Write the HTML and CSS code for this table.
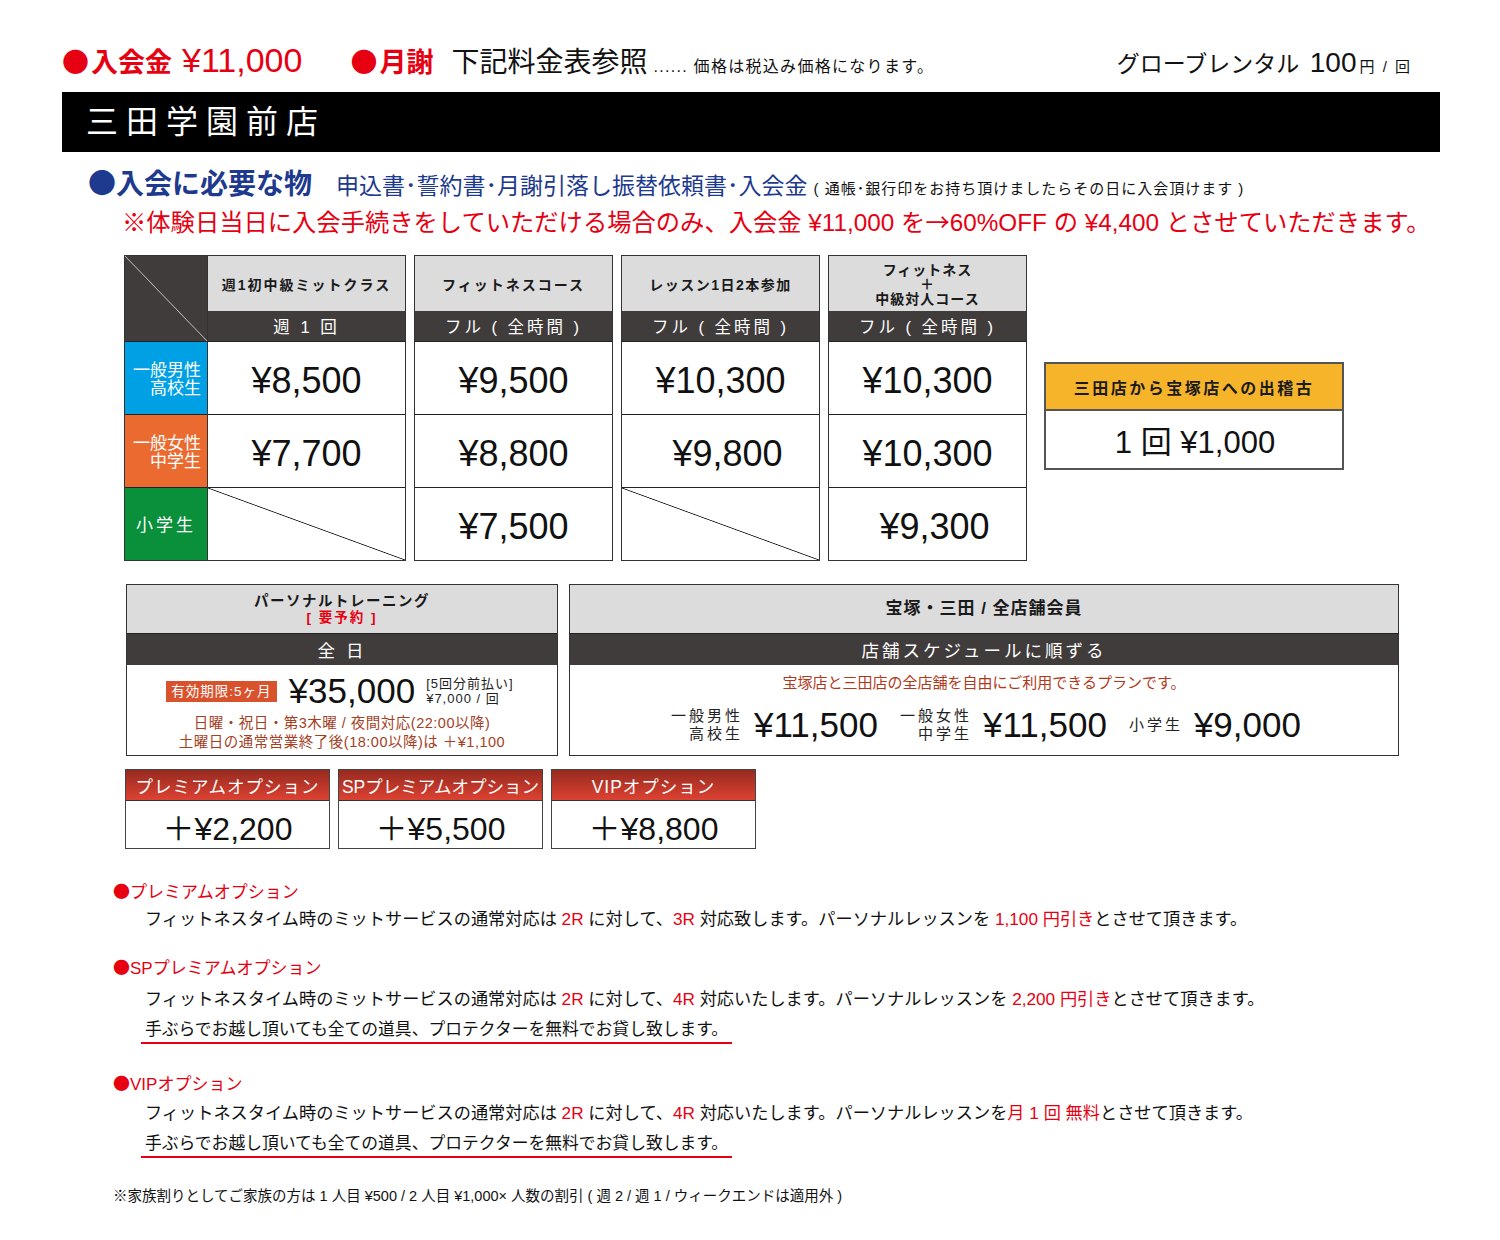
FILE: index.html
```html
<!DOCTYPE html>
<html lang="ja">
<head>
<meta charset="utf-8">
<title>三田学園前店 料金表</title>
<link rel="stylesheet" href="styles.css">
</head>
<body>
<div class="page">
  <div class="topline">
    <div class="fee"><span class="dot">●</span><b>入会金</b><span class="feenum">¥11,000</span></div>
    <div class="monthly"><span class="dot">●</span><b>月謝</b></div>
    <div class="ref">下記料金表参照</div>
    <div class="tax">...... 価格は税込み価格になります。</div>
    <div class="glove">グローブレンタル <span class="gnum">100</span><span class="gunit">円 / 回</span></div>
  </div>

  <div class="storebar">三田学園前店</div>

  <div class="req">
    <span class="reqtitle"><span class="dot">●</span>入会に必要な物</span>
    <span class="reqdocs">申込書･誓約書･月謝引落し振替依頼書･入会金</span>
    <span class="reqsmall">( 通帳･銀行印をお持ち頂けましたらその日に入会頂けます )</span>
  </div>
  <div class="note">※体験日当日に入会手続きをしていただける場合のみ、入会金 ¥11,000 を<span class="cjk">→</span>60%OFF の ¥4,400 とさせていただきます。</div>

  <div class="content">
    <div class="pricearea">
      <div class="grp">
        <div class="lcol">
          <div class="corner"></div>
          <div class="lcell blue"><span>一般男性<br>高校生</span></div>
          <div class="lcell orange"><span>一般女性<br>中学生</span></div>
          <div class="lcell green center"><span>小学生</span></div>
        </div>
        <div class="pcol">
          <div class="phead">週1初中級ミットクラス</div>
          <div class="psub">週 1 回</div>
          <div class="pcell">¥8,500</div>
          <div class="pcell">¥7,700</div>
          <div class="pcell slash"></div>
        </div>
      </div>
      <div class="pcol">
        <div class="phead">フィットネスコース</div>
        <div class="psub">フル ( 全時間 )</div>
        <div class="pcell">¥9,500</div>
        <div class="pcell">¥8,800</div>
        <div class="pcell">¥7,500</div>
      </div>
      <div class="pcol">
        <div class="phead tight">レッスン1日2本参加</div>
        <div class="psub">フル ( 全時間 )</div>
        <div class="pcell">¥10,300</div>
        <div class="pcell shift">¥9,800</div>
        <div class="pcell slash"></div>
      </div>
      <div class="pcol">
        <div class="phead stack">フィットネス<br>＋<br>中級対人コース</div>
        <div class="psub">フル ( 全時間 )</div>
        <div class="pcell">¥10,300</div>
        <div class="pcell">¥10,300</div>
        <div class="pcell shift">¥9,300</div>
      </div>
      <div class="visit">
        <div class="visithead">三田店から宝塚店への出稽古</div>
        <div class="visitbody">1 回 ¥1,000</div>
      </div>
    </div>

    <div class="row2">
      <div class="box ptbox">
        <div class="bhead"><div class="bt">パーソナルトレーニング</div><div class="bred">[ 要予約 ]</div></div>
        <div class="bsub">全 日</div>
        <div class="ptbody">
          <div class="ptrow">
            <span class="badge">有効期限:5ヶ月</span>
            <span class="ptprice">¥35,000</span>
            <span class="ptsmall">[5回分前払い]<br>¥7,000 / 回</span>
          </div>
          <div class="ptnote">日曜・祝日・第3木曜 / 夜間対応(22:00以降)<br>土曜日の通常営業終了後(18:00以降)は ＋¥1,100</div>
        </div>
      </div>
      <div class="box asbox">
        <div class="bhead"><div class="bt big">宝塚・三田 / 全店舗会員</div></div>
        <div class="bsub">店舗スケジュールに順ずる</div>
        <div class="asbody">
          <div class="asnote">宝塚店と三田店の全店舗を自由にご利用できるプランです。</div>
          <div class="asrow">
            <span class="aslabel">一般男性<br>高校生</span><span class="asprice">¥11,500</span>
            <span class="aslabel">一般女性<br>中学生</span><span class="asprice">¥11,500</span>
            <span class="aslabel">小学生</span><span class="asprice">¥9,000</span>
          </div>
        </div>
      </div>
    </div>

    <div class="options">
      <div class="opt"><div class="opthead">プレミアムオプション</div><div class="optbody">＋¥2,200</div></div>
      <div class="opt"><div class="opthead sp">SPプレミアムオプション</div><div class="optbody">＋¥5,500</div></div>
      <div class="opt"><div class="opthead">VIPオプション</div><div class="optbody">＋¥8,800</div></div>
    </div>
  </div>

  <div class="notes">
    <div class="nt n1"><span class="dot">●</span>プレミアムオプション</div>
    <div class="np p1">フィットネスタイム時のミットサービスの通常対応は <em>2R</em> に対して、<em>3R</em> 対応致します。パーソナルレッスンを <em>1,100 円引き</em>とさせて頂きます。</div>

    <div class="nt n2"><span class="dot">●</span>SPプレミアムオプション</div>
    <div class="np p2">フィットネスタイム時のミットサービスの通常対応は <em>2R</em> に対して、<em>4R</em> 対応いたします。パーソナルレッスンを <em>2,200 円引き</em>とさせて頂きます。</div>
    <div class="np"><span class="ul">手ぶらでお越し頂いても全ての道具、プロテクターを無料でお貸し致します。</span></div>

    <div class="nt n3"><span class="dot">●</span>VIPオプション</div>
    <div class="np p4">フィットネスタイム時のミットサービスの通常対応は <em>2R</em> に対して、<em>4R</em> 対応いたします。パーソナルレッスンを<em>月 1 回 無料</em>とさせて頂きます。</div>
    <div class="np"><span class="ul">手ぶらでお越し頂いても全ての道具、プロテクターを無料でお貸し致します。</span></div>

    <div class="foot">※家族割りとしてご家族の方は 1 人目 ¥500 / 2 人目 ¥1,000× 人数の割引 ( 週 2 / 週 1 / ウィークエンドは適用外 )</div>
  </div>
</div>
</body>
</html>
```

FILE: styles.css
```css
* { box-sizing: border-box; }
html, body { margin: 0; padding: 0; background: #fff; }
body {
  font-family: "Liberation Sans", "Noto Sans CJK JP", sans-serif;
  color: #1a1a1a;
}
.page { width: 1500px; padding: 40px 60px 0 62px; }
.dot, .cjk { font-family: "Noto Sans CJK JP", sans-serif; }

/* top line */
.topline { display: flex; align-items: baseline; height: 40px; line-height: 40px; }
.fee, .monthly { color: #e60012; font-size: 27px; }
.fee b, .monthly b { font-weight: 700; }
.fee .dot, .monthly .dot { margin-right: 2px; }
.feenum { font-size: 34px; margin-left: 10px; }
.monthly { margin-left: 48px; }
.ref { font-size: 28px; margin-left: 18px; color: #111; }
.tax { font-size: 16px; margin-left: 6px; color: #111; letter-spacing: 1.3px; }
.glove { margin-left: auto; margin-right: 28px; font-size: 23px; color: #111; }
.gnum { font-size: 28px; margin-left: 4px; }
.gunit { font-size: 15px; margin-left: 3px; letter-spacing: 2px; }

/* store bar */
.storebar {
  margin-top: 12px; height: 60px; background: #000; color: #fff;
  font-size: 32px; letter-spacing: 8px; line-height: 60px; padding-left: 24px;
}

.req { margin-top: 14px; height: 32px; display: flex; align-items: baseline; padding-left: 26px; line-height: 32px; }
.reqtitle { color: #1d3a8e; font-size: 28px; font-weight: 700; }
.reqtitle .dot { font-weight: 400; }
.reqdocs { color: #1d3a8e; font-size: 23px; margin-left: 24px; }
.reqsmall { font-size: 15px; margin-left: 6px; color: #111; letter-spacing: 1px; }

.note { margin-top: 7px; height: 32px; line-height: 32px; padding-left: 60px; color: #e60012; font-size: 24.3px; white-space: nowrap; }

/* content */
.content { margin-top: 18px; margin-left: 62px; }
.pricearea { display: flex; align-items: flex-start; gap: 8px; }
.grp { display: flex; }

.lcol { width: 83px; border: 1px solid #333; border-right: none; }
.corner {
  height: 85px; background-color: #403c3b;
  background-image: linear-gradient(to top right, transparent calc(50% - 0.8px), #b5b5b5 50%, transparent calc(50% + 0.8px));
}
.lcell { height: 73px; border-top: 1px solid #222; color: #fff; font-size: 17px; line-height: 18px; display: flex; align-items: center; justify-content: flex-end; padding-right: 6px; padding-top: 3px; text-align: right; }
.lcell.center { justify-content: center; padding-right: 0; letter-spacing: 3px; }
.blue { background: #00a0e5; }
.orange { background: #ea6a2f; }
.green { background: #0a8f3b; }

.pcol { width: 199px; border: 1px solid #333; }
.phead {
  height: 55px; background: #dcdcdd; display: flex; align-items: center; justify-content: center;
  font-size: 14px; font-weight: 700; letter-spacing: 2px; color: #1a1a1a; text-align: center;
}
.phead.tight { letter-spacing: 1.5px; }
.phead.stack { line-height: 14.5px; letter-spacing: 1px; padding-top: 2px; }
.psub { height: 30px; background: #403c3b; color: #fff; font-size: 16.5px; letter-spacing: 3px; display: flex; align-items: center; justify-content: center; }
.pcell { height: 73px; border-top: 1px solid #222; display: flex; align-items: center; justify-content: center; font-size: 36px; padding-top: 5px; color: #111; }
.pcell.shift { padding-left: 14px; }
.pcell.slash { background-image: linear-gradient(to top right, transparent calc(50% - 0.8px), #111 50%, transparent calc(50% + 0.8px)); }

.visit { margin-top: 107px; margin-left: 9px; width: 300px; border: 2px solid #555; }
.visithead { height: 47px; background: #f6b42b; border-bottom: 2px solid #555; display: flex; align-items: center; justify-content: center; font-size: 16px; font-weight: 700; letter-spacing: 2.5px; color: #1a1a1a; }
.visitbody { height: 57px; display: flex; align-items: center; justify-content: center; font-size: 31px; padding-left: 2px; color: #111; }

/* row 2 */
.row2 { display: flex; gap: 11px; margin-top: 23px; }
.box { border: 1px solid #333; }
.ptbox { width: 432px; margin-left: 2px; }
.asbox { width: 830px; }
.bhead { height: 49px; background: #dcdcdd; border-bottom: 1px solid #222; display: flex; flex-direction: column; align-items: center; justify-content: center; }
.bt { font-size: 14.5px; font-weight: 700; letter-spacing: 1.5px; line-height: 18px; }
.bt.big { font-size: 17px; letter-spacing: 1px; }
.bred { color: #e60012; font-size: 13.5px; font-weight: 700; letter-spacing: 2px; line-height: 16px; }
.bsub { height: 31px; background: #403c3b; color: #fff; font-size: 17.5px; letter-spacing: 3px; display: flex; align-items: center; justify-content: center; }

.ptbody { height: 90px; padding-top: 8px; }
.ptrow { display: flex; align-items: center; justify-content: center; padding-right: 4px; }
.badge { background: #d8532d; color: #fff; font-size: 13.5px; letter-spacing: 1px; padding: 0 5px; height: 21px; line-height: 21px; }
.ptprice { font-size: 35px; margin-left: 12px; line-height: 36px; color: #111; }
.ptsmall { font-size: 13px; line-height: 15px; margin-left: 11px; letter-spacing: 1px; color: #222; }
.ptnote { color: #a5401e; font-size: 14.5px; line-height: 19px; text-align: center; margin-top: 5px; letter-spacing: 0.5px; }

.asbody { height: 90px; padding-top: 8px; }
.asnote { color: #b0391a; font-size: 15px; text-align: center; line-height: 20px; }
.asrow { display: flex; align-items: center; justify-content: center; margin-top: 12px; padding-left: 4px; }
.aslabel { font-size: 15px; line-height: 18px; letter-spacing: 3px; text-align: right; color: #222; margin-right: 11px; }
.asprice { font-size: 35px; margin-right: 22px; color: #111; }
.asprice:last-child { margin-right: 0; }

/* options */
.options { display: flex; gap: 8px; margin-top: 13px; margin-left: 1px; }
.opt { width: 205px; border: 1px solid #444; }
.opthead { height: 31px; background: linear-gradient(#962a1f, #dd4232); border-bottom: 1px solid #333; color: #fff; font-size: 17.5px; letter-spacing: 1px; display: flex; align-items: center; justify-content: center; white-space: nowrap; }
.opthead.sp { letter-spacing: 0; }
.optbody { height: 47px; display: flex; align-items: center; justify-content: center; font-size: 32px; padding-top: 2px; color: #111; }

/* notes */
.notes { margin-left: 51px; margin-top: 30px; }
.nt { color: #e60012; font-size: 17px; line-height: 24px; height: 24px; }
.n2 { margin-top: 21px; }
.n3 { margin-top: 27px; }
.np { font-size: 17.2px; line-height: 30px; height: 30px; padding-left: 32px; color: #111; white-space: nowrap; }
.p1 { margin-top: 1px; }
.p2 { margin-top: 5px; }
.p4 { margin-top: 3px; }
.np em { font-style: normal; color: #e60012; }
.ul { display: inline-block; font-size: 16.8px; border-bottom: 2px solid #e60012; line-height: 24px; padding: 0 4px; margin-left: -4px; }
.foot { font-size: 14.5px; margin-top: 28px; line-height: 20px; height: 20px; color: #111; white-space: nowrap; }
```
